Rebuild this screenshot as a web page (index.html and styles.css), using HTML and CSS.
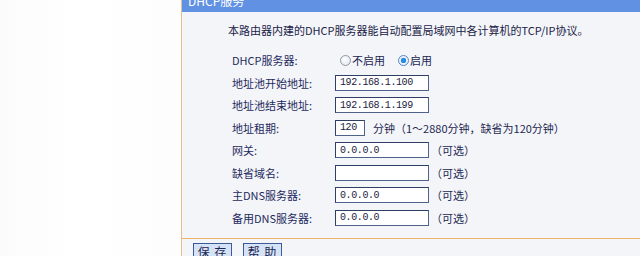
FILE: index.html
```html
<!DOCTYPE html>
<html lang="zh-CN">
<head>
    <meta charset="UTF-8">
    <title>DHCP服务</title>
    <link rel="stylesheet" href="styles.css">
</head>
<body>
    <div class="page">
        <div class="side"></div>
        <div class="main">
            <div class="title">DHCP服务</div>
            <div class="panel">
                <p class="intro">本路由器内建的DHCP服务器能自动配置局域网中各计算机的TCP/IP协议。</p>
                <div class="form">
                    <div class="label">DHCP服务器:</div>
                    <div class="ctrl">
                        <span class="radio"></span><span class="opt">不启用</span>
                        <span class="radio on"></span><span class="opt">启用</span>
                    </div>

                    <div class="label">地址池开始地址:</div>
                    <div class="ctrl"><input class="field" type="text" value="192.168.1.100"></div>

                    <div class="label">地址池结束地址:</div>
                    <div class="ctrl"><input class="field" type="text" value="192.168.1.199"></div>

                    <div class="label">地址租期:</div>
                    <div class="ctrl">
                        <input class="field short" type="text" value="120">
                        <span class="unit">分钟</span>
                        <span class="note">（1～2880分钟，缺省为120分钟）</span>
                    </div>

                    <div class="label">网关:</div>
                    <div class="ctrl"><input class="field" type="text" value="0.0.0.0"><span class="hint">（可选）</span></div>

                    <div class="label">缺省域名:</div>
                    <div class="ctrl"><input class="field" type="text" value=""><span class="hint">（可选）</span></div>

                    <div class="label">主DNS服务器:</div>
                    <div class="ctrl"><input class="field" type="text" value="0.0.0.0"><span class="hint">（可选）</span></div>

                    <div class="label">备用DNS服务器:</div>
                    <div class="ctrl"><input class="field" type="text" value="0.0.0.0"><span class="hint">（可选）</span></div>
                </div>
            </div>
            <div class="buttons">
                <button class="btn">保 存</button>
                <button class="btn">帮 助</button>
            </div>
        </div>
    </div>
</body>
</html>
```

FILE: styles.css
```css
* {
    box-sizing: border-box;
}

body {
    margin: 0;
    width: 640px;
    height: 256px;
    overflow: hidden;
    font-family: "Noto Sans CJK SC", sans-serif;
    font-size: 11px;
    color: #1c2752;
}

.page {
    display: flex;
    height: 256px;
}

.side {
    width: 181px;
    flex: none;
    background: linear-gradient(to right, #fbfbfb, #ffffff 40%, #fdfdfd);
}

.main {
    flex: 1;
    display: flex;
    flex-direction: column;
    border-left: 1px solid #e2bf8c;
    background-color: #f4f5f8;
}

.title {
    height: 21px;
    margin-top: -9px;
    line-height: 19px;
    padding-left: 6px;
    background-color: #6191e2;
    color: #fff;
    font-size: 12px;
    flex: none;
}

.panel {
    height: 227px;
    flex: none;
    padding: 10px 0 0 46px;
    border-bottom: 1px solid #ecb46e;
}

.intro {
    margin: 0;
    line-height: 16px;
    color: #1a2248;
}

.form {
    display: grid;
    grid-template-columns: 103px auto;
    grid-auto-rows: 22.5px;
    margin: 10.75px 0 0 4px;
}

.label {
    display: flex;
    align-items: center;
    color: #1d2a5e;
}

.ctrl {
    display: flex;
    align-items: center;
}

.radio {
    width: 11px;
    height: 11px;
    margin: 0 1px 0 5px;
    border-radius: 50%;
    border: 1px solid #8c98aa;
    background: radial-gradient(circle at 40% 35%, #ffffff, #dde2ea);
}

.radio.on {
    margin-left: 13px;
    border-color: #5b86c4;
    background: radial-gradient(circle, #2a8ee0 0 2.5px, #e9f1fb 3px);
}

.field {
    width: 94px;
    height: 16px;
    margin: 0;
    padding: 0 4px;
    border: 1px solid #4e628c;
    border-top-color: #2f3e63;
    border-left-color: #2f3e63;
    background-color: #fff;
    font-family: "Liberation Mono", monospace;
    font-size: 10px;
    letter-spacing: -0.4px;
    color: #1c2240;
    outline: none;
}

.field.short {
    width: 30px;
}

.unit {
    margin-left: 8px;
}

.hint {
    margin-left: 2px;
}

.buttons {
    display: flex;
    gap: 11px;
    padding: 4px 0 0 11px;
}

.btn {
    width: 39px;
    height: 18px;
    padding: 0;
    border: 1px solid #3a5a98;
    background-color: #d6e3f6;
    color: #1c2752;
    font-family: "Noto Sans CJK SC", sans-serif;
    font-size: 12px;
    line-height: 14px;
    letter-spacing: 1px;
}
```
